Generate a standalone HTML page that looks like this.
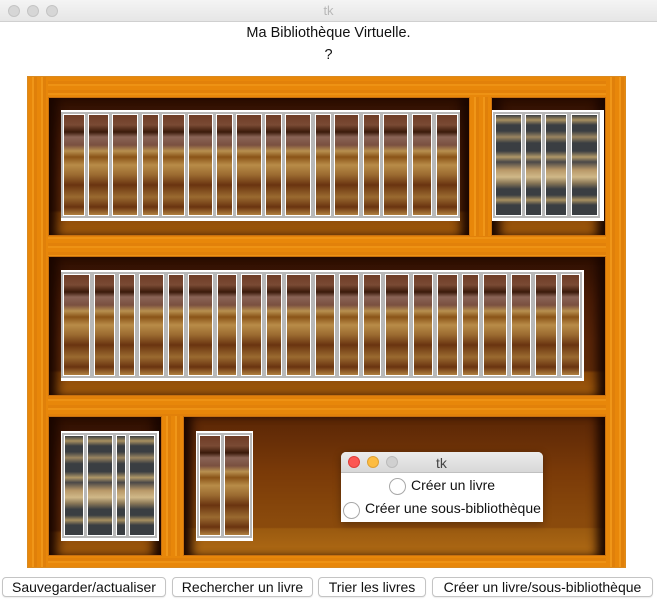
<!DOCTYPE html>
<html><head><meta charset="utf-8"><style>
*{margin:0;padding:0;box-sizing:border-box}
body{width:657px;height:601px;background:#fff;position:relative;overflow:hidden;font-family:"Liberation Sans",sans-serif}
.tb{position:absolute;left:0;top:0;width:657px;height:22px;background:linear-gradient(#f4f4f4,#e6e6e6);border-bottom:1px solid #d0d0d0}
.dot{position:absolute;top:5px;width:12px;height:12px;border-radius:50%;background:#d6d6d6;border:1px solid #c4c4c4}
.abs{position:absolute}
.frame{position:absolute;left:27px;top:76px;width:599px;height:492px;background:repeating-linear-gradient(0deg,#e8870a 0 4px,#ee9214 4px 6px,#e2810a 6px 9px);border:1px solid #d98a20}
.vf{background:repeating-linear-gradient(90deg,#e8870a 0 4px,#f09618 4px 6px,#e0800a 6px 9px)}
.cmp{position:absolute;border:1px solid #c87010;background:linear-gradient(180deg,#2e0f02 0%,#4a1c05 30%,#5a2608 60%,#5e2a08 82%,#8a4808 84%,#a05a0c 100%);box-shadow:inset 12px 0 10px -4px #1a0600,inset -12px 0 10px -4px #1a0600}
.cmp.l{background:linear-gradient(180deg,#5a2606 0%,#7a3a08 40%,#8a4a0c 75%,#8a4a0c 80%,#9a5a10 81%,#b06a14 100%)}
.wh{position:absolute;background:#fff}
.b{position:absolute;top:2px;bottom:3px;border:2px solid #b8b8b8;background:#fff;padding:1px}
.b i{display:block;width:100%;height:100%;background:
linear-gradient(180deg,#6e3c26 0%,#7a4a34 10%,#3a1a0a 17%,#8a6456 22%,#7a5040 30%,#b89050 36%,#8a5418 42%,#b88c48 50%,#9a6a30 60%,#6a3410 70%,#9a6a30 82%,#6a3410 92%,#b08040 100%)}
.b.d i{background:linear-gradient(180deg,#3a3e42 0%,#a89060 5%,#3a3e42 10%,#3a3e42 16%,#9a8560 22%,#3a3e42 28%,#3a3e42 36%,#b09868 42%,#4a4848 47%,#b89868 55%,#d0b888 62%,#8a7858 68%,#3a3e42 74%,#3a3e42 80%,#a89060 85%,#3a3e42 90%,#3a3e42 100%)}
.btn{position:absolute;top:577px;height:20px;border:1px solid #c4c4c4;border-radius:4px;background:#fff;font-size:14px;text-align:center;line-height:18px;color:#111;box-shadow:0 1px 1px rgba(0,0,0,.08);white-space:nowrap}
.rad{position:absolute;width:17px;height:17px;border-radius:50%;border:1px solid #a8a8a8;background:#fff}
</style></head><body>
<div class="tb"><div class="dot" style="left:8px"></div><div class="dot" style="left:27px"></div><div class="dot" style="left:46px"></div>
<div class="abs" style="left:0;width:657px;top:3px;text-align:center;font-size:13px;color:#b8b8b8">tk</div></div>
<div class="abs" style="left:0;width:657px;top:25px;text-align:center;font-size:14.5px;color:#111">Ma Bibliothèque Virtuelle.</div>
<div class="abs" style="left:0;width:657px;top:47px;text-align:center;font-size:14.5px;color:#111">?</div>

<div class="frame"></div>
<div class="abs vf" style="left:28px;top:77px;width:20px;height:490px"></div>
<div class="abs vf" style="left:606px;top:77px;width:19px;height:490px"></div>
<div class="abs vf" style="left:470px;top:97px;width:21px;height:139px"></div>
<div class="abs vf" style="left:162px;top:416px;width:21px;height:140px"></div>

<div class="cmp" style="left:48px;top:97px;width:422px;height:139px"></div>
<div class="cmp" style="left:491px;top:97px;width:115px;height:139px"></div>
<div class="cmp" style="left:48px;top:256px;width:558px;height:140px"></div>
<div class="cmp" style="left:48px;top:416px;width:114px;height:140px"></div>
<div class="cmp l" style="left:183px;top:416px;width:423px;height:140px"></div>

<div class="wh" style="left:61px;top:110px;width:399px;height:111px">
<div class="b" style="left:0;width:26px"><i></i></div><div class="b" style="left:25px;width:25px"><i></i></div><div class="b" style="left:49px;width:30px"><i></i></div><div class="b" style="left:79px;width:21px"><i></i></div><div class="b" style="left:99px;width:27px"><i></i></div><div class="b" style="left:125px;width:29px"><i></i></div><div class="b" style="left:153px;width:21px"><i></i></div><div class="b" style="left:173px;width:30px"><i></i></div><div class="b" style="left:202px;width:21px"><i></i></div><div class="b" style="left:222px;width:30px"><i></i></div><div class="b" style="left:252px;width:20px"><i></i></div><div class="b" style="left:271px;width:29px"><i></i></div><div class="b" style="left:300px;width:21px"><i></i></div><div class="b" style="left:320px;width:29px"><i></i></div><div class="b" style="left:349px;width:24px"><i></i></div><div class="b" style="left:373px;width:26px"><i></i></div>
</div>
<div class="wh" style="left:492px;top:110px;width:112px;height:111px">
<div class="b d" style="left:1px;width:31px"><i></i></div><div class="b d" style="left:31px;width:21px"><i></i></div><div class="b d" style="left:51px;width:26px"><i></i></div><div class="b d" style="left:77px;width:31px"><i></i></div>
</div>
<div class="wh" style="left:61px;top:270px;width:523px;height:111px">
<div class="b" style="left:0;width:31px"><i></i></div><div class="b" style="left:31px;width:25px"><i></i></div><div class="b" style="left:56px;width:20px"><i></i></div><div class="b" style="left:76px;width:29px"><i></i></div><div class="b" style="left:105px;width:20px"><i></i></div><div class="b" style="left:125px;width:29px"><i></i></div><div class="b" style="left:154px;width:24px"><i></i></div><div class="b" style="left:178px;width:25px"><i></i></div><div class="b" style="left:203px;width:20px"><i></i></div><div class="b" style="left:223px;width:29px"><i></i></div><div class="b" style="left:252px;width:24px"><i></i></div><div class="b" style="left:276px;width:24px"><i></i></div><div class="b" style="left:300px;width:22px"><i></i></div><div class="b" style="left:322px;width:28px"><i></i></div><div class="b" style="left:350px;width:24px"><i></i></div><div class="b" style="left:374px;width:25px"><i></i></div><div class="b" style="left:399px;width:21px"><i></i></div><div class="b" style="left:420px;width:28px"><i></i></div><div class="b" style="left:448px;width:24px"><i></i></div><div class="b" style="left:472px;width:26px"><i></i></div><div class="b" style="left:498px;width:23px"><i></i></div>
</div>
<div class="wh" style="left:61px;top:431px;width:98px;height:110px">
<div class="b d" style="left:1px;width:24px"><i></i></div><div class="b d" style="left:24px;width:30px"><i></i></div><div class="b d" style="left:53px;width:14px"><i></i></div><div class="b d" style="left:66px;width:30px"><i></i></div>
</div>
<div class="wh" style="left:196px;top:431px;width:57px;height:110px">
<div class="b" style="left:1px;width:26px"><i></i></div><div class="b" style="left:26px;width:30px"><i></i></div>
</div>

<div class="abs" style="left:341px;top:452px;width:202px;height:70px;background:#fff;border-radius:5px 5px 0 0;box-shadow:0 2px 8px rgba(0,0,0,.35)">
<div style="height:21px;background:linear-gradient(#ececec,#d8d8d8);border-radius:5px 5px 0 0;border-bottom:1px solid #c0c0c0;position:relative">
<div class="dot" style="left:7px;top:4px;background:#fc5753;border-color:#df3e3a"></div>
<div class="dot" style="left:26px;top:4px;background:#fdbc40;border-color:#dea034"></div>
<div class="dot" style="left:45px;top:4px;background:#d0d0d0;border-color:#bbb"></div>
<div class="abs" style="left:95px;top:3px;font-size:14px;color:#444">tk</div></div>
<div class="rad" style="left:48px;top:26px"></div><div class="abs" style="left:70px;top:25px;font-size:14px;color:#111;white-space:nowrap">Créer un livre</div>
<div class="rad" style="left:2px;top:50px"></div><div class="abs" style="left:24px;top:48px;font-size:14px;color:#111;white-space:nowrap">Créer une sous-bibliothèque</div>
</div>

<div class="btn" style="left:2px;width:164px">Sauvegarder/actualiser</div>
<div class="btn" style="left:172px;width:141px">Rechercher un livre</div>
<div class="btn" style="left:318px;width:108px">Trier les livres</div>
<div class="btn" style="left:432px;width:221px">Créer un livre/sous-bibliothèque</div>
</body></html>
